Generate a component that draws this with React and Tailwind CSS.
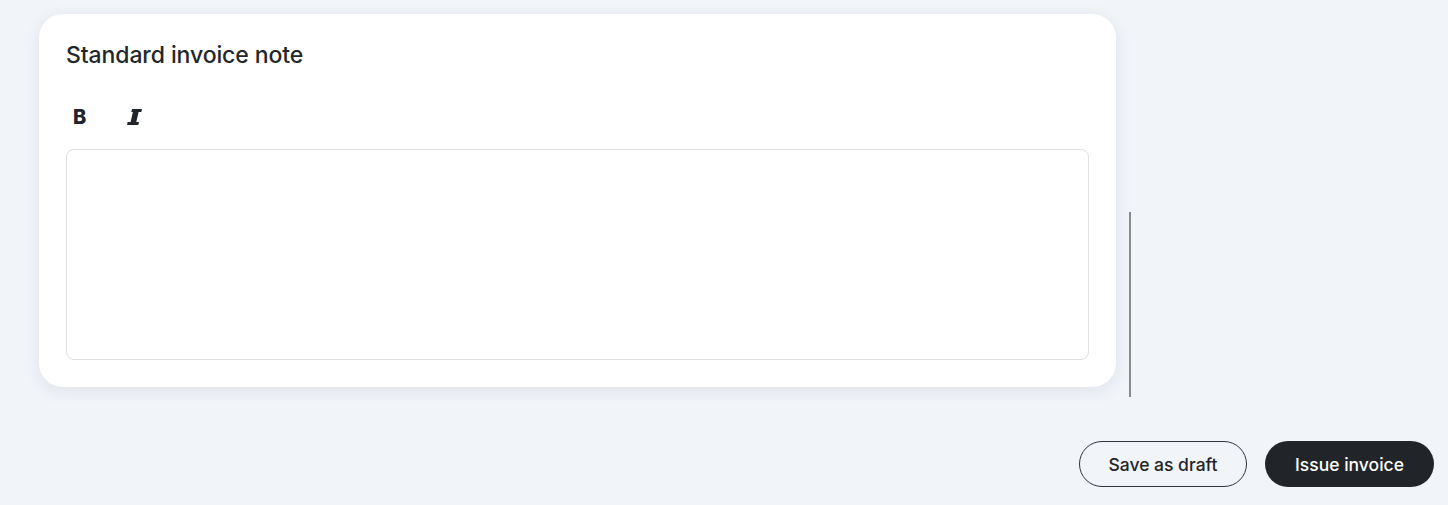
export default function App() {
  return (
    <div className="min-h-[505px] w-[1448px] bg-[#f1f4f9] font-['Inter',sans-serif] text-[#212529]">
      <div className="flex items-start pt-[14px] pl-[39px]">
        <div className="w-[1077px] rounded-[24px] bg-white px-[27px] pt-[26px] pb-[27px] shadow-[0_4px_18px_rgba(30,40,70,0.08)]">
          <h2 className="text-[23px] leading-[30px] font-medium tracking-[-0.1px] text-[#23272b]">Standard invoice note</h2>
          <div className="mt-[39px] flex h-[16px] items-center pl-[7px]">
            <span className="text-[20px] font-extrabold leading-none text-[#212529]">B</span>
            <svg className="ml-[41px]" width="15" height="16" viewBox="0 0 15 16" fill="#212529">
              <path d="M5 0 H15 L14.3 3 H11.6 L9.3 13 H12 L11.3 16 H0 L0.7 13 H3.6 L5.9 3 H4.3 Z" />
            </svg>
          </div>
          <div className="mt-[24px] h-[211px] w-full rounded-[8px] border border-[#e0e0e2] bg-white"></div>
        </div>
        <div className="ml-[13px] mt-[198px] h-[185px] w-[2px] bg-[#8a8a8a]"></div>
      </div>
      <div className="mt-[44px] flex justify-end gap-[18px] pr-[14px]">
        <button className="h-[46px] w-[168px] rounded-full border border-[#30343a] bg-transparent pt-[2px] text-[17.5px] font-medium text-[#212529]">Save as draft</button>
        <button className="h-[46px] w-[169px] rounded-full bg-[#212529] pt-[2px] text-[17.5px] font-medium text-white">Issue invoice</button>
      </div>
    </div>
  );
}
